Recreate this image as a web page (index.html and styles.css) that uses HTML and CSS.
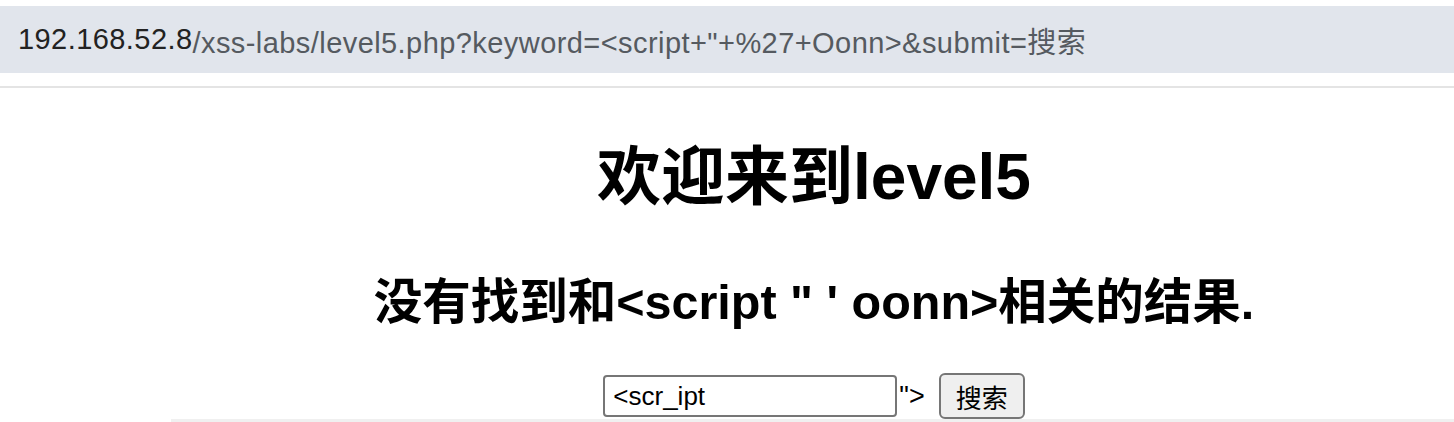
FILE: index.html
```html
<!DOCTYPE html>
<html>
<head>
<meta charset="utf-8">
<link rel="stylesheet" href="styles.css">
</head>
<body>
<div class="urlbar"><span class="host">192.168.52.8</span><span class="path">/xss-labs/level5.php?keyword=&lt;script+"+%27+Oonn&gt;&amp;submit=搜索</span></div>
<div class="divider"></div>
<div class="page">
  <h1 class="title">欢迎来到level5</h1>
  <h2 class="result">没有找到和&lt;script " ' oonn&gt;相关的结果.</h2>
  <div class="form">
    <input class="kw" type="text" value="&lt;scr_ipt"><span class="tail">"&gt;</span><button class="btn">搜索</button>
  </div>
  <div class="bottomline"></div>
</div>
</body>
</html>
```
FILE: styles.css
```css
html, body {
  margin: 0;
  padding: 0;
  background: #ffffff;
  overflow: hidden;
}
body {
  width: 1454px;
  height: 422px;
  font-family: "Liberation Sans", Arial, "Noto Sans CJK SC", sans-serif;
}
.urlbar {
  margin-top: 6px;
  height: 67px;
  background: #e1e5ec;
  display: flex;
  align-items: center;
  padding-left: 18px;
  font-size: 29px;
  white-space: nowrap;
  letter-spacing: 0.43px;
}
.host { color: #222; }
.path { color: #555a60; }
.divider {
  margin-top: 13px;
  height: 2px;
  background: #e4e4e4;
}
.page {
  margin-left: 171px;
  width: 1286px;
  text-align: center;
  color: #000;
}
.title {
  margin: 50px 0 0;
  font-size: 64px;
  line-height: 78px;
  font-weight: bold;
}
.result {
  margin: 58px 0 0;
  font-size: 48.5px;
  line-height: 56px;
  font-weight: bold;
}
.form {
  margin-top: 43px;
  display: flex;
  justify-content: center;
  align-items: center;
  height: 46px;
}
.kw {
  box-sizing: border-box;
  width: 294px;
  height: 42px;
  border: 2px solid #767676;
  border-radius: 4px;
  padding: 0 8px;
  font-size: 26px;
  font-family: "Liberation Sans", Arial, sans-serif;
  color: #000;
  margin: 0;
}
.tail {
  font-size: 27px;
  margin: 0 14px 0 2px;
}
.btn {
  box-sizing: border-box;
  width: 86px;
  height: 46px;
  border: 2px solid #767676;
  border-radius: 6px;
  background: #efefef;
  font-size: 26px;
  font-family: "Noto Sans CJK SC", sans-serif;
  color: #000;
  padding: 0;
  margin: 0;
}
.bottomline {
  height: 3px;
  background: #f0f0f0;
}
```
